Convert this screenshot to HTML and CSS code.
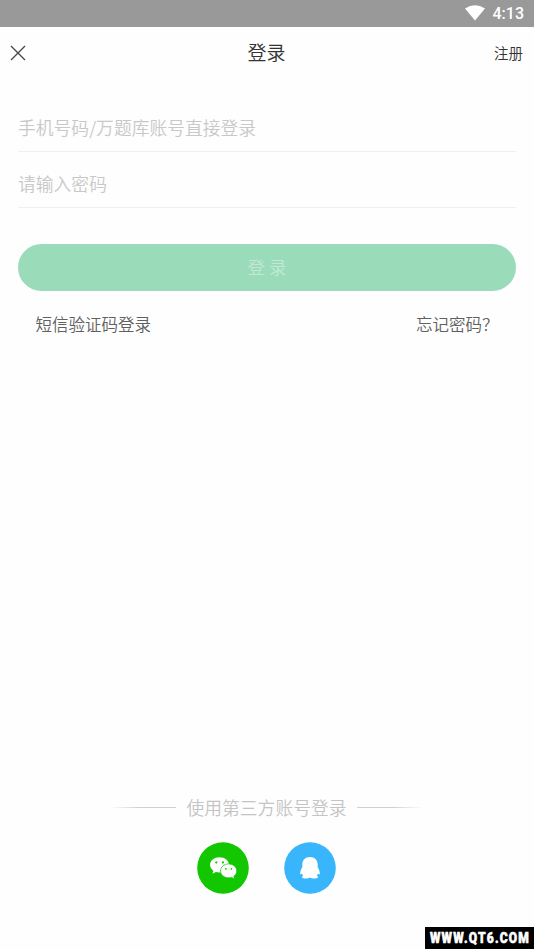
FILE: index.html
```html
<!DOCTYPE html>
<html lang="zh-CN">
<head>
<meta charset="utf-8">
<title>登录</title>
<link rel="stylesheet" href="styles.css">
</head>
<body>
<div class="screen">
  <div class="status">
    <svg class="wifi" viewBox="0 0 20 16"><path d="M0 3.5Q10-3 20 3.5L10 15.5Z" fill="#fff"/></svg>
    <span class="time">4:13</span>
  </div>
  <header class="navbar">
    <svg class="close" viewBox="0 0 16 16"><path d="M1 1L15 15M15 1L1 15" stroke="#444" stroke-width="1.3" fill="none"/></svg>
    <h1 class="title">登录</h1>
    <a class="register">注册</a>
  </header>
  <main class="form">
    <div class="field">手机号码/万题库账号直接登录</div>
    <div class="field">请输入密码</div>
    <div class="submit">登 录</div>
    <div class="links"><span>短信验证码登录</span><span>忘记密码？</span></div>
  </main>
  <footer class="third">
    <div class="divider"><i class="line"></i><span class="label">使用第三方账号登录</span><i class="line line-right"></i></div>
    <div class="socials">
      <svg class="social" viewBox="0 0 52 52">
        <circle cx="26" cy="26" r="25.8" fill="#12c700"/>
        <path d="M22.5 15.2c-5.3 0-9.5 3.4-9.5 7.6 0 2.4 1.3 4.5 3.4 5.9l-.9 3 3.4-1.8c1.1.3 2.3.5 3.6.5 5.3 0 9.5-3.4 9.5-7.6s-4.2-7.6-9.5-7.6z" fill="#fff"/>
        <path d="M31.6 21.9c4.5 0 8.1 3.1 8.1 7 0 2.2-1.1 4.1-2.9 5.4l.7 2.5-2.9-1.4c-.9.3-1.9.4-3 .4-4.5 0-8.1-3.1-8.1-6.9s3.6-7 8.1-7z" fill="#fff" stroke="#12c700" stroke-width=".7"/>
        <g fill="#12c700"><circle cx="19.3" cy="20.4" r="1.1"/><circle cx="25.9" cy="20.4" r="1.1"/><circle cx="28.8" cy="26.8" r=".9"/><circle cx="34.4" cy="26.8" r=".9"/></g>
      </svg>
      <svg class="social" viewBox="0 0 52 52">
        <circle cx="26" cy="26" r="25.8" fill="#38b5fb"/>
        <path d="M26 15c-4.9 0-7.7 3.4-7.7 7.6v2.6c-1.3 2-2.3 4.3-2.1 6.6.1 1 .8.9 1.7-.3.3.8.7 1.5 1.3 2.1-1.1.6-1.5 1.4-.9 2.2.9 1.1 5.9 1 7.7-.2 1.8 1.2 6.8 1.3 7.7.2.6-.8.2-1.6-.9-2.2.6-.6 1-1.3 1.3-2.1.9 1.2 1.6 1.3 1.7.3.2-2.3-.8-4.6-2.1-6.6v-2.6c0-4.2-2.8-7.6-7.7-7.6z" fill="#fff"/>
      </svg>
    </div>
  </footer>
  <div class="watermark"><span>WWW.QT6.COM</span></div>
</div>
</body>
</html>
```

FILE: styles.css
```css
* { box-sizing: border-box; }
body {
  margin: 0;
  background: #fff;
  font-family: "Noto Sans CJK SC", sans-serif;
}
.screen {
  position: relative;
  display: flex;
  flex-direction: column;
  width: 534px;
  height: 949px;
  overflow: hidden;
  background: #fefefe;
}
.status {
  display: flex;
  align-items: center;
  justify-content: flex-end;
  gap: 8px;
  height: 27px;
  padding: 0 10px 1px 0;
  background: #999;
}
.wifi { width: 20px; height: 16px; }
.time { font: 500 16px/26px Roboto, sans-serif; color: #fff; padding-top: 2px; }
.navbar {
  display: grid;
  grid-template-columns: 1fr auto 1fr;
  align-items: center;
  height: 52px;
  padding: 0 11px 0 10px;
}
.close { width: 16px; height: 16px; }
.title { margin: 0 0 2px; font-size: 19px; line-height: 28px; font-weight: 350; color: #333; }
.register { justify-self: end; font-size: 14.5px; line-height: 22px; font-weight: 350; color: #333; }
.form { padding: 17px 18px 0; }
.field {
  height: 56px;
  padding-top: 15px;
  border-bottom: 1px solid #f0f0f0;
  font-size: 17.8px;
  line-height: 32px;
  font-weight: 350;
  color: #c8c8c8;
}
.submit {
  height: 47px;
  margin-top: 36px;
  border-radius: 24px;
  background: #9adbb9;
  color: #c2e9d4;
  font-size: 17.5px;
  line-height: 46px;
  font-weight: 350;
  text-align: center;
}
.links {
  display: flex;
  justify-content: space-between;
  padding: 20px 17.5px 0;
  font-size: 16.5px;
  line-height: 26px;
  font-weight: 350;
  color: #606060;
}
.third { margin-top: auto; padding: 0 1px 55px 0; }
.divider { display: flex; align-items: center; justify-content: center; gap: 10px; }
.line { width: 66px; height: 1px; background: linear-gradient(90deg, transparent, #d0d0d0 45%); }
.line-right { background: linear-gradient(270deg, transparent, #d0d0d0 45%); }
.label { font-size: 17.8px; line-height: 28px; font-weight: 350; color: #c4c4c4; }
.socials { display: flex; justify-content: center; gap: 35px; margin-top: 21px; }
.social { width: 52px; height: 52px; }
.watermark {
  position: absolute;
  right: 0;
  bottom: 0;
  width: 109px;
  height: 22px;
  padding-left: 5px;
  background: #000;
  color: #fff;
  font: 900 14.5px/24px Roboto, sans-serif;
  letter-spacing: 1.4px;
  white-space: nowrap;
  -webkit-text-stroke: .6px #fff;
}
.watermark span { display: inline-block; transform: scaleX(.83); transform-origin: left; }
```
